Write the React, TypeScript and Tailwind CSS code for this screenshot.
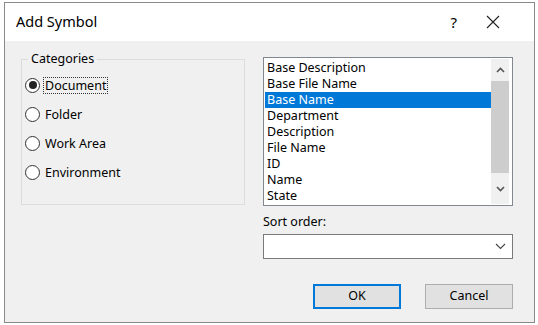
import React, { useState } from "react";

const fields = [
  "Base Description",
  "Base File Name",
  "Base Name",
  "Department",
  "Description",
  "File Name",
  "ID",
  "Name",
  "State",
];

const categories = ["Document", "Folder", "Work Area", "Environment"];

const Radio = ({ checked }: { checked: boolean }) => (
  <span className="flex h-[15px] w-[15px] shrink-0 items-center justify-center rounded-full border-[1.5px] border-[#333] bg-white">
    {checked && <span className="h-[8px] w-[8px] rounded-full bg-[#222]" />}
  </span>
);

const App = () => {
  const [category, setCategory] = useState("Document");
  const [selected, setSelected] = useState("Base Name");

  return (
    <div
      className="h-[325px] w-[538px] bg-white pl-[4px] pt-[2px] text-[12.5px] text-black"
      style={{ fontFamily: '"Noto Sans", "Open Sans", sans-serif' }}
    >
      <div className="flex h-[321px] w-[531px] flex-col border border-[#8a8a8a]">
        {/* Title bar */}
        <div className="flex h-[38px] items-center bg-white pl-[11px]">
          <span className="text-[14.5px]">Add Symbol</span>
          <span className="ml-auto mr-[29px] text-[15px]">?</span>
          <svg width="14" height="14" viewBox="0 0 14 14" className="mr-[34px]">
            <path d="M1 1L13 13M13 1L1 13" stroke="#222" strokeWidth="1.1" />
          </svg>
        </div>

        {/* Body */}
        <div className="flex flex-1 bg-[#f0f0f0] pl-[16px] pt-[10px]">
          <fieldset className="h-[154px] w-[224px] border border-[#dcdcdc] pl-[3px]">
            <legend className="ml-[3px] px-[3px] leading-[16px]">Categories</legend>
            <div className="mt-[9px] flex flex-col gap-[11px]">
              {categories.map((c) => (
                <label
                  key={c}
                  className="flex h-[18px] cursor-default items-center gap-[3px]"
                  onClick={() => setCategory(c)}
                >
                  <Radio checked={category === c} />
                  <span
                    className={
                      category === c
                        ? "border border-dotted border-[#333] px-[1px] leading-[15px]"
                        : "px-[2px] leading-[15px]"
                    }
                  >
                    {c}
                  </span>
                </label>
              ))}
            </div>
          </fieldset>

          <div className="ml-[18px] flex w-[250px] flex-col pt-[6px]">
            {/* List box */}
            <div className="flex h-[149px] border border-[#828790] bg-white">
              <ul className="flex-1 pl-[1px] pt-[2px]">
                {fields.map((f) => (
                  <li
                    key={f}
                    onClick={() => setSelected(f)}
                    className={
                      selected === f
                        ? "h-[16px] bg-[#0078d7] pl-[2px] leading-[16px] text-white"
                        : "h-[16px] pl-[2px] leading-[16px]"
                    }
                  >
                    {f}
                  </li>
                ))}
              </ul>
              <div className="my-[1px] mr-[3px] flex w-[18px] flex-col bg-[#f0f0f0]">
                <div className="flex h-[22px] items-center justify-center">
                  <svg width="9" height="6" viewBox="0 0 9 6">
                    <path d="M1 5L4.5 1.5L8 5" stroke="#555" strokeWidth="1.6" fill="none" />
                  </svg>
                </div>
                <div className="h-[92px] bg-[#cdcdcd]" />
                <div className="flex flex-1 items-center justify-center">
                  <svg width="9" height="6" viewBox="0 0 9 6">
                    <path d="M1 1L4.5 4.5L8 1" stroke="#555" strokeWidth="1.6" fill="none" />
                  </svg>
                </div>
              </div>
            </div>

            <div className="mt-[8px] leading-[16px]">Sort order:</div>
            <div className="mt-[4px] flex h-[25px] items-center justify-end border border-[#7a7a7a] bg-white pr-[6px]">
              <svg width="11" height="7" viewBox="0 0 11 7">
                <path d="M1 1L5.5 5.5L10 1" stroke="#444" strokeWidth="1.1" fill="none" />
              </svg>
            </div>

            <div className="mt-[25px] flex gap-[24px] pl-[50px]">
              <button className="h-[25px] w-[89px] border-2 border-[#0078d7] bg-[#e1e1e1]">
                OK
              </button>
              <button className="h-[25px] w-[89px] border border-[#adadad] bg-[#e1e1e1]">
                Cancel
              </button>
            </div>
          </div>
        </div>
      </div>
    </div>
  );
};

export default App;
